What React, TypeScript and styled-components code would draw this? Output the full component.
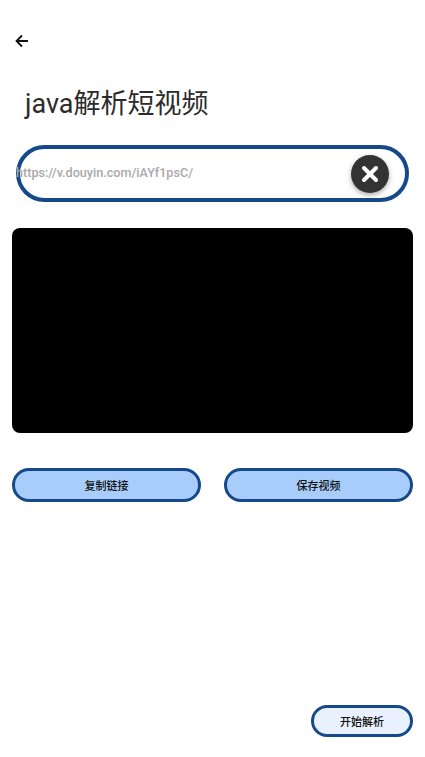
import styled, { createGlobalStyle } from 'styled-components';

const GlobalStyle = createGlobalStyle`
  html, body {
    margin: 0;
    padding: 0;
    background: #fff;
  }
  body {
    font-family: Roboto, "Noto Sans CJK SC", sans-serif;
  }
`;

const Page = styled.div`
  width: 425px;
  height: 757px;
  overflow: hidden;
  display: flex;
  flex-direction: column;
  padding: 30px 12px 20px;
  box-sizing: border-box;
`;

const BackButton = styled.button`
  width: 22px;
  height: 22px;
  padding: 0;
  margin-left: -1px;
  border: none;
  background: none;
  display: flex;
  align-items: center;
  justify-content: center;
  color: #111;
`;

const Title = styled.h1`
  margin: 33px 0 0 13px;
  font-size: 27px;
  line-height: 38px;
  font-weight: 400;
  color: #2b2b2b;
`;

const UrlBar = styled.div`
  margin: 22px 4px 0;
  height: 57px;
  box-sizing: border-box;
  border: 4px solid #15498a;
  border-radius: 29px;
  display: flex;
  align-items: center;
  justify-content: space-between;
  padding-right: 16px;
`;

const UrlText = styled.span`
  margin: 0 0 2px -4px;
  font-size: 12.6px;
  font-weight: 500;
  color: #a9a9a9;
`;

const ClearButton = styled.button`
  width: 38px;
  height: 38px;
  padding: 0;
  border: none;
  border-radius: 50%;
  background: #333;
  box-shadow: 0 2px 5px rgba(0, 0, 0, 0.35);
  display: flex;
  align-items: center;
  justify-content: center;
`;

const Video = styled.div`
  margin-top: 26px;
  height: 205px;
  background: #000;
  border-radius: 8px;
`;

const ActionRow = styled.div`
  margin-top: 35px;
  display: flex;
  justify-content: space-between;
`;

const PillButton = styled.button<{ $light?: boolean; $width: number }>`
  width: ${(p) => p.$width}px;
  height: ${(p) => (p.$light ? 32 : 34)}px;
  padding: 0;
  box-sizing: border-box;
  border: 3px solid #15498a;
  border-radius: 17px;
  background: ${(p) => (p.$light ? '#e8f1fd' : '#a8cdfa')};
  color: #111;
  font-family: Roboto, "Noto Sans CJK SC", sans-serif;
  font-size: 11px;
  font-weight: 500;
`;

const Footer = styled.div`
  margin-top: auto;
  display: flex;
  justify-content: flex-end;
`;

export default function App() {
  return (
    <Page>
      <GlobalStyle />
      <BackButton aria-label="back">
        <svg width="16" height="16" viewBox="0 0 16 16" fill="none" stroke="currentColor" strokeWidth="1.8">
          <path d="M14 8H2.5M8 2.5 2.5 8 8 13.5" />
        </svg>
      </BackButton>
      <Title>java解析短视频</Title>
      <UrlBar>
        <UrlText>https://v.douyin.com/iAYf1psC/</UrlText>
        <ClearButton aria-label="clear">
          <svg width="20" height="20" viewBox="0 0 20 20" fill="none" stroke="#fff" strokeWidth="4" strokeLinecap="round">
            <path d="M4 4 16 16M16 4 4 16" />
          </svg>
        </ClearButton>
      </UrlBar>
      <Video />
      <ActionRow>
        <PillButton $width={189}>复制链接</PillButton>
        <PillButton $width={189}>保存视频</PillButton>
      </ActionRow>
      <Footer>
        <PillButton $light $width={102}>开始解析</PillButton>
      </Footer>
    </Page>
  );
}
